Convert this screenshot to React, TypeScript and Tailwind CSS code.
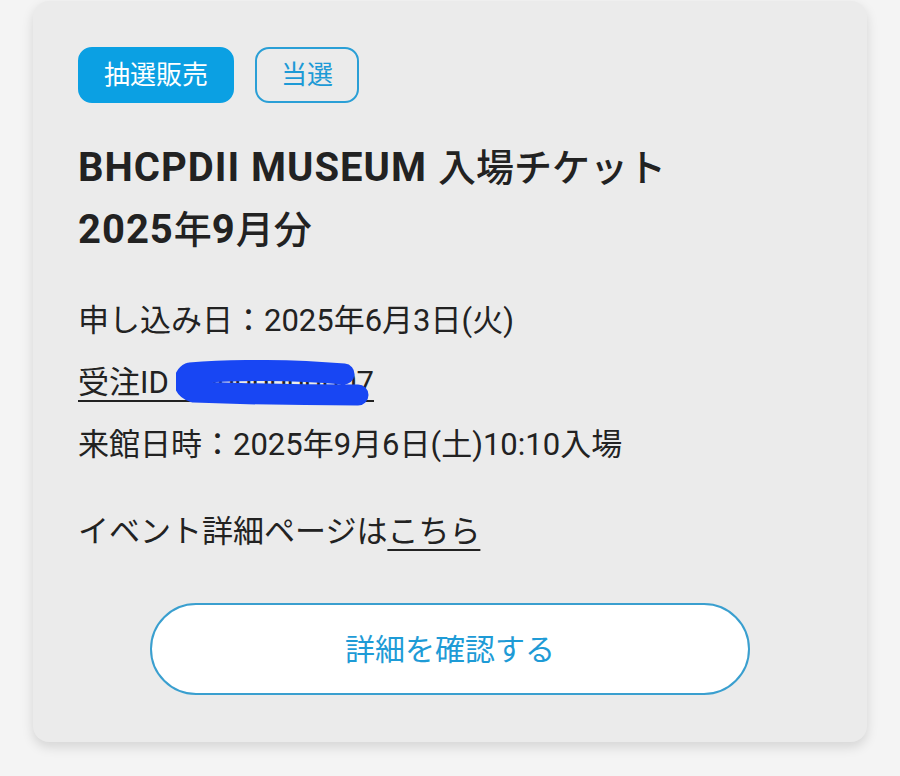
import React from 'react';

const FONT = { fontFamily: 'Roboto, "Noto Sans CJK JP", sans-serif' };

const Redaction: React.FC = () => (
  <svg
    className="pointer-events-none absolute left-[98px] top-[-4px]"
    width="206"
    height="50"
    viewBox="0 0 206 50"
  >
    <path
      d="M14 13 C60 9 120 10 168 14 M18 32 C70 34 130 35 182 35 M14 13 C6 17 6 28 18 32"
      fill="none"
      stroke="#1846f3"
      strokeWidth="21"
      strokeLinecap="round"
    />
  </svg>
);

const App: React.FC = () => {
  return (
    <div className="min-h-screen bg-[#f4f4f4] pl-[33px] pt-[1px]" style={FONT}>
      <div className="w-[834px] rounded-[16px] bg-[#ebebeb] px-[45px] pt-[46px] pb-[47px] text-[#222222] shadow-[0_5px_12px_rgba(0,0,0,0.13)]">
        {/* Badges */}
        <div className="flex gap-[21px]">
          <span className="flex h-[56px] items-center rounded-[14px] border-2 border-[#0ba0e3] bg-[#0ba0e3] px-[24px] text-[26px] text-white">
            抽選販売
          </span>
          <span className="flex h-[56px] items-center rounded-[14px] border-2 border-[#2a9fd6] px-[24px] text-[26px] text-[#1d9ad6]">
            当選
          </span>
        </div>

        {/* Title */}
        <h2 className="mt-[34px] text-[40px] font-bold leading-[62px] tracking-[1px]">
          BHCPDII MUSEUM <span className="text-[38px] font-medium tracking-normal">入場チケット</span>
          <br />
          2025<span className="text-[38px] font-medium tracking-normal">年</span>9
          <span className="text-[38px] font-medium tracking-normal">月分</span>
        </h2>

        {/* Details */}
        <div className="mt-[29px] text-[31px] leading-[62px]">
          <p>申し込み日：2025年6月3日(火)</p>
          <p>
            <span className="relative underline decoration-[2px] underline-offset-[7px]">
              受注ID：0000000007
              <Redaction />
            </span>
          </p>
          <p>来館日時：2025年9月6日(土)10:10入場</p>
        </div>

        <p className="mt-[25px] text-[31px] leading-[62px]">
          イベント詳細ページは
          <span className="underline decoration-[2px] underline-offset-[7px]">こちら</span>
        </p>

        <button className="mx-auto mt-[40px] flex h-[92px] w-[600px] items-center justify-center rounded-full border-2 border-[#3a9fcf] bg-white text-[30px] text-[#1e9bd6]">
          詳細を確認する
        </button>
      </div>
    </div>
  );
};

export default App;
